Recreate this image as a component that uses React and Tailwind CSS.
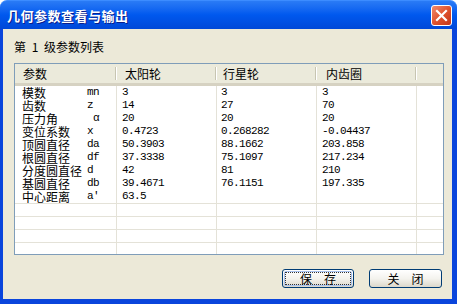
import React from 'react';

const rows = [
  ['模数', 'mn', '3', '3', '3'],
  ['齿数', 'z', '14', '27', '70'],
  ['压力角', ' α', '20', '20', '20'],
  ['变位系数', 'x', '0.4723', '0.268282', '-0.04437'],
  ['顶圆直径', 'da', '50.3903', '88.1662', '203.858'],
  ['根圆直径', 'df', '37.3338', '75.1097', '217.234'],
  ['分度圆直径', 'd', '42', '81', '210'],
  ['基圆直径', 'db', '39.4671', '76.1151', '197.335'],
  ['中心距离', "a'", '63.5', '', ''],
];

const cjk = "font-['Noto_Sans_CJK_SC','Liberation_Sans',sans-serif]";
const mono = "font-['Liberation_Mono','Noto_Sans_CJK_SC',monospace] text-[11px] tracking-[-0.6px]";

function HeaderCell({ label, w, pad }) {
  return (
    <div className={`relative h-full flex items-center ${w} ${pad}`}>
      <span className="text-[12px] leading-none text-black">{label}</span>
      <div className="absolute right-0 top-[3px] bottom-[3px] w-[2px] flex">
        <div className="w-px bg-[#c7c5b2]" />
        <div className="w-px bg-white" />
      </div>
    </div>
  );
}

export default function App() {
  return (
    <div className={`w-[457px] h-[304px] flex flex-col ${cjk} select-none`}>
      {/* title bar */}
      <div className="h-[29px] shrink-0 rounded-t-[7px] bg-gradient-to-b from-[#2a7bf5] via-[#0058ee] to-[#0048d8] border-t border-[#3c8cff] flex items-center justify-between pl-[7px] pr-[5px]">
        <span className="text-[13px] tracking-[0.5px] font-bold leading-none whitespace-nowrap text-white [text-shadow:1px_1px_0_#0a1e8c]">几何参数查看与输出</span>
        <div className="w-[21px] h-[21px] rounded-[3px] border border-white bg-gradient-to-br from-[#f08a6c] via-[#e0532e] to-[#c2351a] flex items-center justify-center">
          <svg width="13" height="13" viewBox="0 0 13 13">
            <path d="M2 2 L11 11 M11 2 L2 11" stroke="white" strokeWidth="2.2" strokeLinecap="square" />
          </svg>
        </div>
      </div>

      {/* body */}
      <div className="flex-1 flex flex-col bg-[#ece9d8] border-l-[3px] border-r-[5px] border-b-[5px] border-[#0a45dc] pl-[11px] pr-[8px]">
        <div className="mt-[11px] h-[23px] text-[12px] leading-[14px] text-black flex">
          <span>第</span>
          <span className="w-[18px] text-center">1</span>
          <span>级参数列表</span>
        </div>

        <div className="h-[192px] border border-[#7f9db9] bg-white flex flex-col overflow-hidden">
          <div className="h-[22px] shrink-0 flex bg-[#ebeadb] border-b-[3px] border-[#d6d2c2]">
            <HeaderCell label="参数" w="w-[102px]" pad="pl-[8px]" />
            <HeaderCell label="太阳轮" w="w-[100px]" pad="pl-[8px]" />
            <HeaderCell label="行星轮" w="w-[100px]" pad="pl-[6px]" />
            <HeaderCell label="内齿圈" w="w-[100px]" pad="pl-[9px]" />
            <div className="flex-1" />
          </div>

          {rows.map((r, i) => (
            <div key={i} className="h-[13px] shrink-0 flex text-black leading-[13px]">
              <div className="w-[102px] border-r border-[#e4e2d8] flex pl-[7px]">
                <span className="w-[65px] text-[12px] leading-[13px]">{r[0]}</span>
                <span className={`${mono} whitespace-pre`}>{r[1]}</span>
              </div>
              <div className={`w-[100px] border-r border-[#e4e2d8] pl-[5px] ${mono}`}>{r[2]}</div>
              <div className={`w-[100px] border-r border-[#e4e2d8] pl-[4px] ${mono}`}>{r[3]}</div>
              <div className={`w-[100px] border-r border-[#e4e2d8] pl-[5px] ${mono}`}>{r[4]}</div>
              <div className="flex-1" />
            </div>
          ))}

          {[0, 1, 2, 3].map((i) => (
            <div key={i} className="h-[13px] shrink-0 flex border-t border-[#e4e2d8]">
              <div className="w-[102px] border-r border-[#e4e2d8]" />
              <div className="w-[100px] border-r border-[#e4e2d8]" />
              <div className="w-[100px] border-r border-[#e4e2d8]" />
              <div className="w-[100px] border-r border-[#e4e2d8]" />
              <div className="flex-1" />
            </div>
          ))}
        </div>

        <div className="mt-[14px] flex justify-end gap-[15px] mr-[2px]">
          <button className="w-[72px] h-[19px] rounded-[3px] border border-[#003c74] bg-gradient-to-b from-white via-[#f4f3ee] to-[#dcd8cb] p-[1px]">
            <div className="w-full h-full rounded-[2px] border border-[#a9c3f0] flex items-center justify-center">
              <div className="w-full h-full border border-dotted border-[#333] flex items-center justify-center text-[12px] leading-none text-black tracking-[12px] pl-[12px]">
                保存
              </div>
            </div>
          </button>
          <button className="w-[73px] h-[19px] rounded-[3px] border border-[#003c74] bg-gradient-to-b from-white via-[#f4f3ee] to-[#dcd8cb] flex items-center justify-center text-[12px] leading-none text-black tracking-[12px] pl-[12px]">
            关闭
          </button>
        </div>
      </div>
    </div>
  );
}
